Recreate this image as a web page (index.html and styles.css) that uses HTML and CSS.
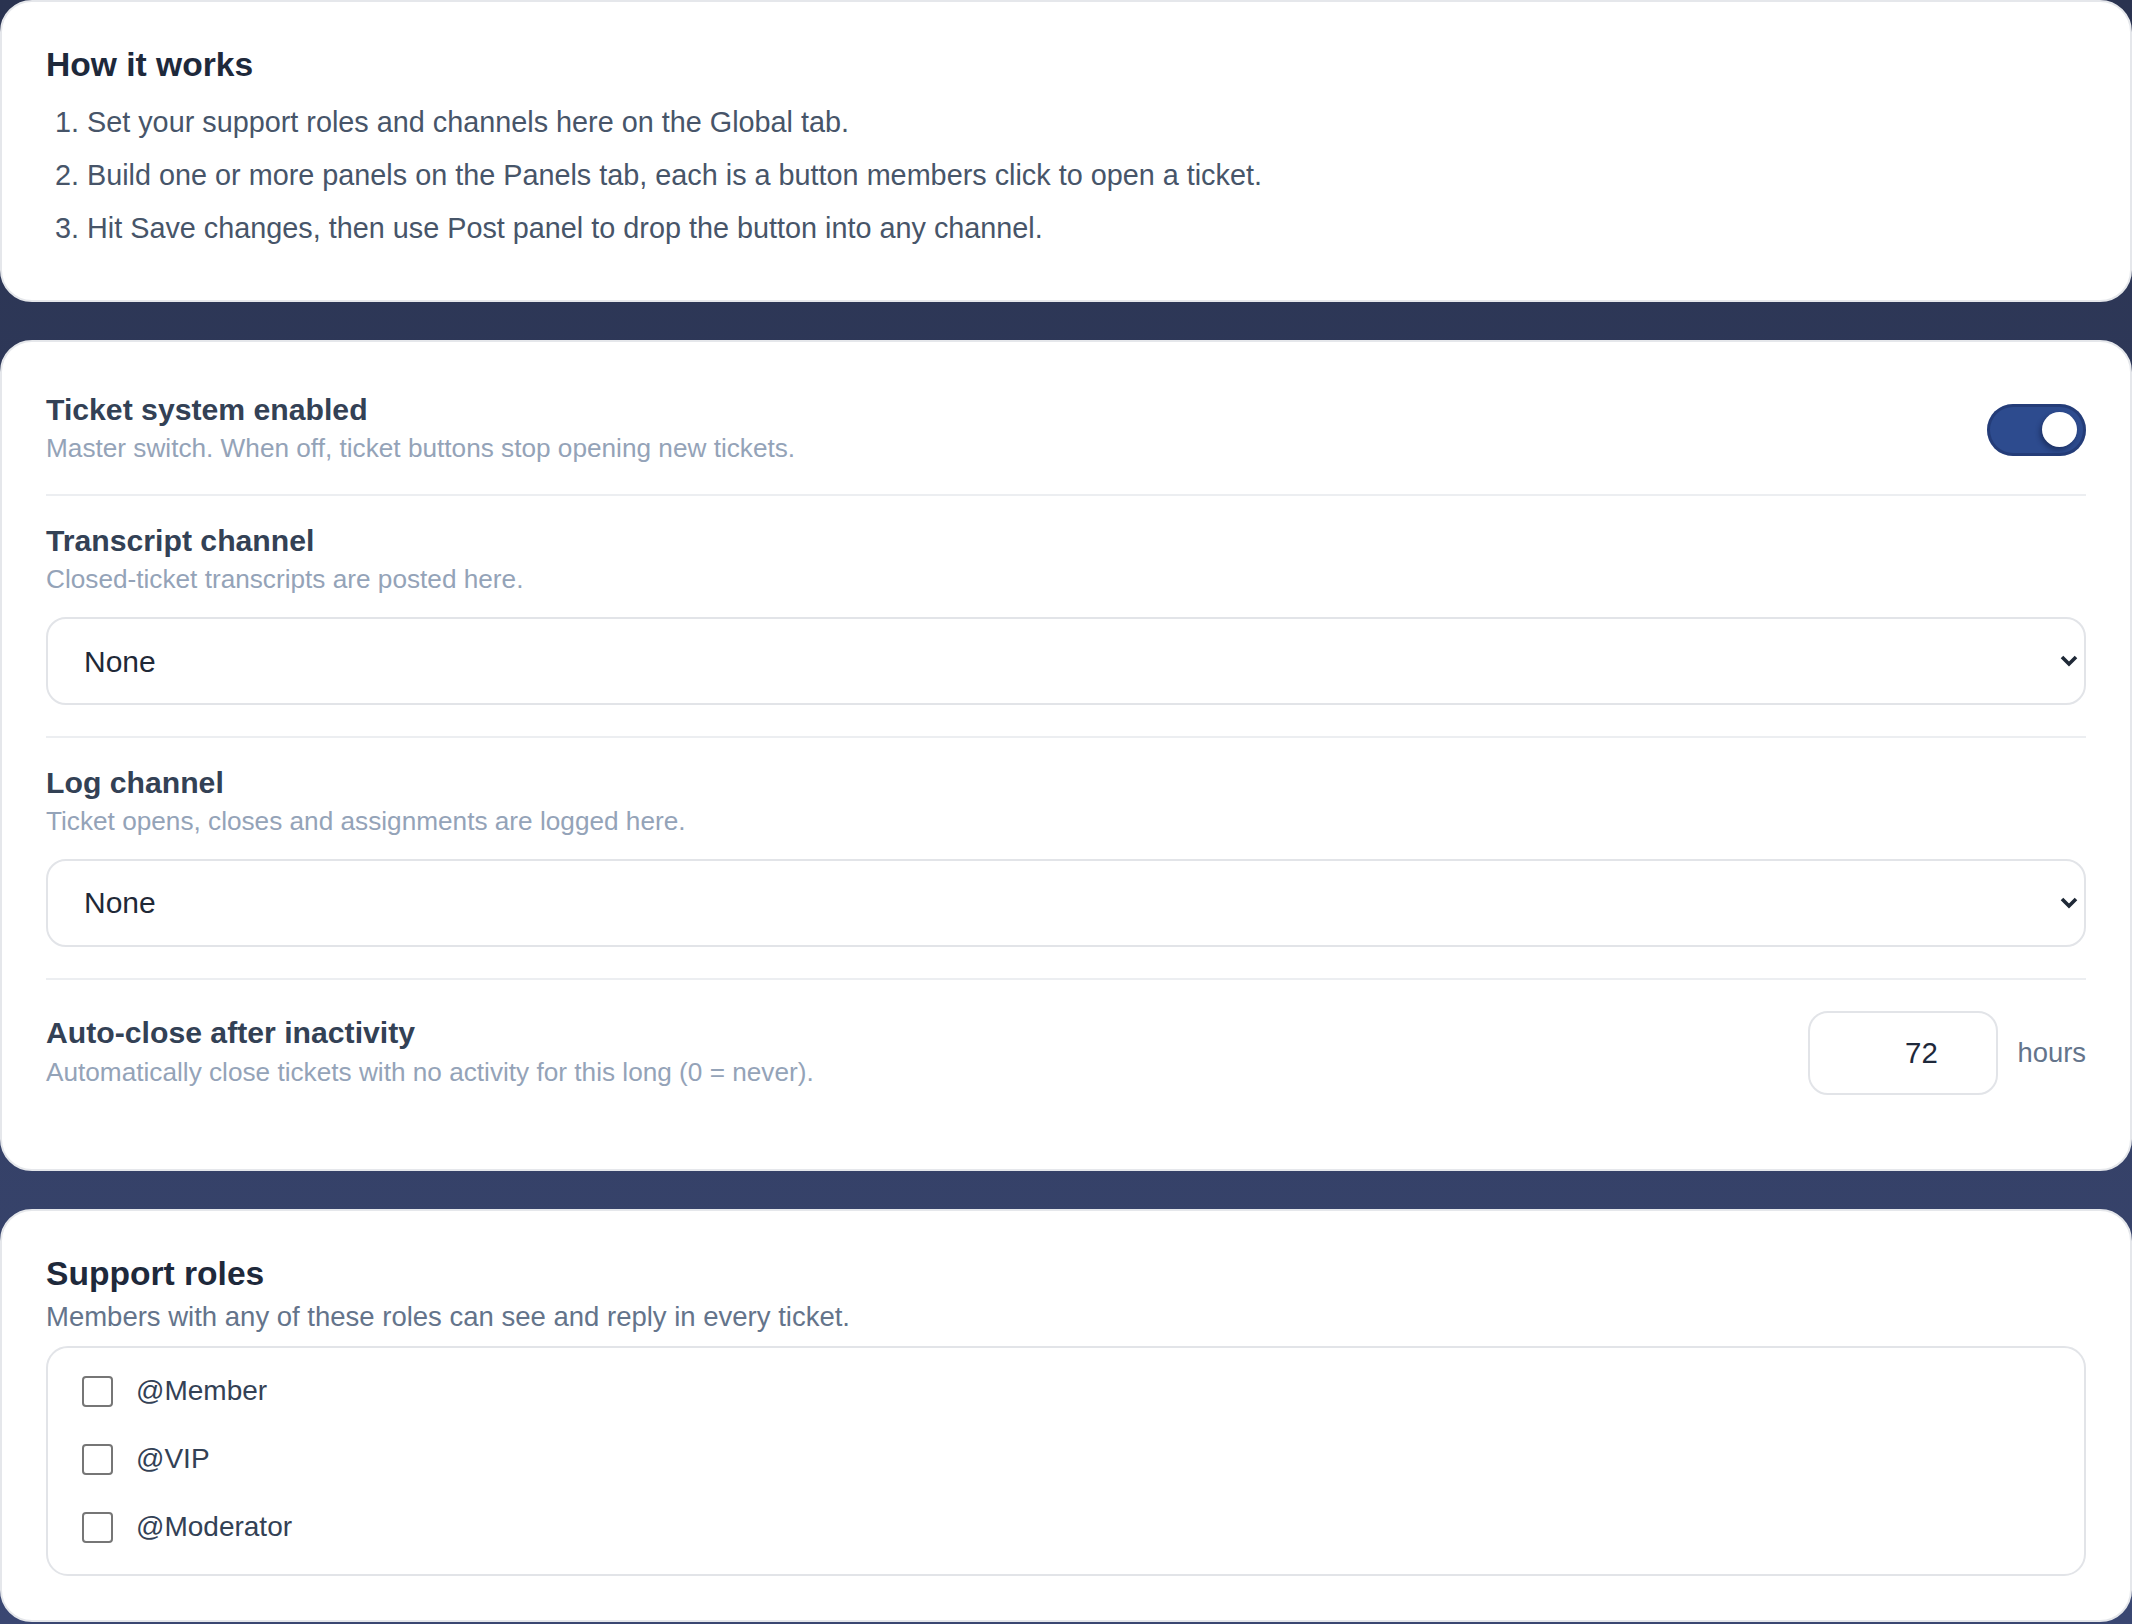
FILE: index.html
```html
<!DOCTYPE html>
<html lang="en">

<head>
<meta charset="utf-8" />
<title>Tickets - Global settings</title>

<!-- styles -->
<link rel="stylesheet" href="styles.css">
</head>

<body>

  <!-- quick intro -->
  <section class="card">
    <h2 class="card-title">How it works</h2>
    <ol class="steps">
      <li>Set your support roles and channels here on the Global tab.</li>
      <li>Build one or more panels on the Panels tab, each is a button members click to open a ticket.</li>
      <li>Hit Save changes, then use Post panel to drop the button into any channel.</li>
    </ol>
  </section>

  <!-- global settings -->
  <section class="card">
    <div class="field field-inline">
      <div class="field-text">
        <div class="field-label">Ticket system enabled</div>
        <div class="field-hint">Master switch. When off, ticket buttons stop opening new tickets.</div>
      </div>
      <span class="switch is-on"><span class="switch-knob"></span></span>
    </div>

    <div class="field">
      <div class="field-label">Transcript channel</div>
      <div class="field-hint">Closed-ticket transcripts are posted here.</div>
      <div class="select-wrap">
        <select class="select"><option>None</option></select>
        <svg class="select-arrow" width="20" height="14" viewBox="0 0 20 14"><path d="M3 3 L10 10 L17 3" /></svg>
      </div>
    </div>

    <div class="field">
      <div class="field-label">Log channel</div>
      <div class="field-hint">Ticket opens, closes and assignments are logged here.</div>
      <div class="select-wrap">
        <select class="select"><option>None</option></select>
        <svg class="select-arrow" width="20" height="14" viewBox="0 0 20 14"><path d="M3 3 L10 10 L17 3" /></svg>
      </div>
    </div>

    <div class="field field-inline">
      <div class="field-text">
        <div class="field-label">Auto-close after inactivity</div>
        <div class="field-hint">Automatically close tickets with no activity for this long (0 = never).</div>
      </div>
      <div class="hours">
        <input class="num" type="number" value="72" min="0">
        <span class="unit">hours</span>
      </div>
    </div>
  </section>

  <!-- roles -->
  <section class="card">
    <h2 class="card-title">Support roles</h2>
    <p class="card-sub">Members with any of these roles can see and reply in every ticket.</p>
    <div class="role-box">
      <label class="role"><input type="checkbox"> @Member</label>
      <label class="role"><input type="checkbox"> @VIP</label>
      <label class="role"><input type="checkbox"> @Moderator</label>
    </div>
  </section>

</body>
</html>
```

FILE: styles.css
```css
html {
  min-height: 100%;
  background: linear-gradient(180deg, #2a3350 0%, #3a4772 100%);
}

body {
  margin: 0;
  font-family: "Liberation Sans", Arial, sans-serif;
  color: #334155;
}

.card {
  background-color: #fff;
  border: 2px solid #e5e7eb;
  border-radius: 32px;
  padding: 44px;
  margin-bottom: 38px;
}
.card:last-child {
  margin-bottom: 0;
}

.card-title {
  margin: 0;
  font-size: 33.6px;
  line-height: 1.15;
  font-weight: bold;
  color: #1e293b;
}

.steps {
  margin: 16px 0 6px;
  padding-left: 41px;
  font-size: 28.8px;
  line-height: 1.5;
  color: #475569;
}
.steps li + li {
  margin-top: 10px;
}

/* one setting per row, line between them */
.field {
  padding: 27px 0 31px;
  border-bottom: 2px solid #eceef1;
}
.field:first-child {
  padding: 6px 0 27px;
}
.field:last-child {
  border-bottom: none;
  padding: 31px 0 30px;
}

.field-inline {
  display: flex;
  align-items: center;
  justify-content: space-between;
  gap: 24px;
}

.field-label {
  font-size: 30.2px;
  line-height: 1.2;
  font-weight: bold;
  color: #334155;
}

.field-hint {
  margin-top: 2px;
  font-size: 26.2px;
  line-height: 1.4;
  color: #94a3b8;
}

.select-wrap {
  position: relative;
  margin-top: 19px;
}

.select {
  display: block;
  width: 100%;
  height: 88px;
  -webkit-appearance: none;
  appearance: none;
  background: #fff;
  border: 2px solid #e2e4e8;
  border-radius: 20px;
  padding: 0 60px 0 36px;
  font-family: inherit;
  font-size: 30px;
  color: #1f2937;
}

.select-arrow {
  position: absolute;
  right: 7px;
  top: 50%;
  margin-top: -7px;
  fill: none;
  stroke: #1f2937;
  stroke-width: 3.6;
  pointer-events: none;
}

/* on/off switch */
.switch {
  flex-shrink: 0;
  display: flex;
  align-items: center;
  justify-content: flex-end;
  box-sizing: border-box;
  width: 99px;
  height: 52px;
  padding: 0 9px;
  border-radius: 26px;
  background-color: #2d4b8e;
  box-shadow: inset 0 0 0 3px rgba(20, 35, 80, 0.35);
}
.switch-knob {
  width: 35px;
  height: 35px;
  border-radius: 50%;
  background-color: #fff;
  box-shadow: -2px 3px 5px rgba(10, 20, 50, 0.45);
}

.hours {
  display: flex;
  align-items: center;
  gap: 19px;
  flex-shrink: 0;
}

.num {
  box-sizing: border-box;
  width: 190px;
  height: 84px;
  border: 2px solid #e2e4e8;
  border-radius: 20px;
  padding: 0 18px 0 54px;
  text-align: center;
  font-family: inherit;
  font-size: 29.4px;
  color: #1e293b;
  -moz-appearance: textfield;
}
.num::-webkit-inner-spin-button,
.num::-webkit-outer-spin-button {
  -webkit-appearance: none;
  margin: 0;
}

.unit {
  font-size: 27.4px;
  color: #64748b;
}

.card-sub {
  margin: 4px 0 10px;
  font-size: 27.5px;
  line-height: 1.4;
  color: #64748b;
}

.role-box {
  display: flex;
  flex-direction: column;
  gap: 26px;
  border: 2px solid #e2e4e8;
  border-radius: 22px;
  padding: 22px 34px 26px;
}

.role {
  display: flex;
  align-items: center;
  gap: 23px;
  height: 42px;
  font-size: 28px;
  color: #334155;
}
.role input {
  -webkit-appearance: none;
  appearance: none;
  box-sizing: border-box;
  width: 31px;
  height: 31px;
  margin: 0;
  border: 2px solid #767676;
  border-radius: 4px;
  background: #fff;
}
```
